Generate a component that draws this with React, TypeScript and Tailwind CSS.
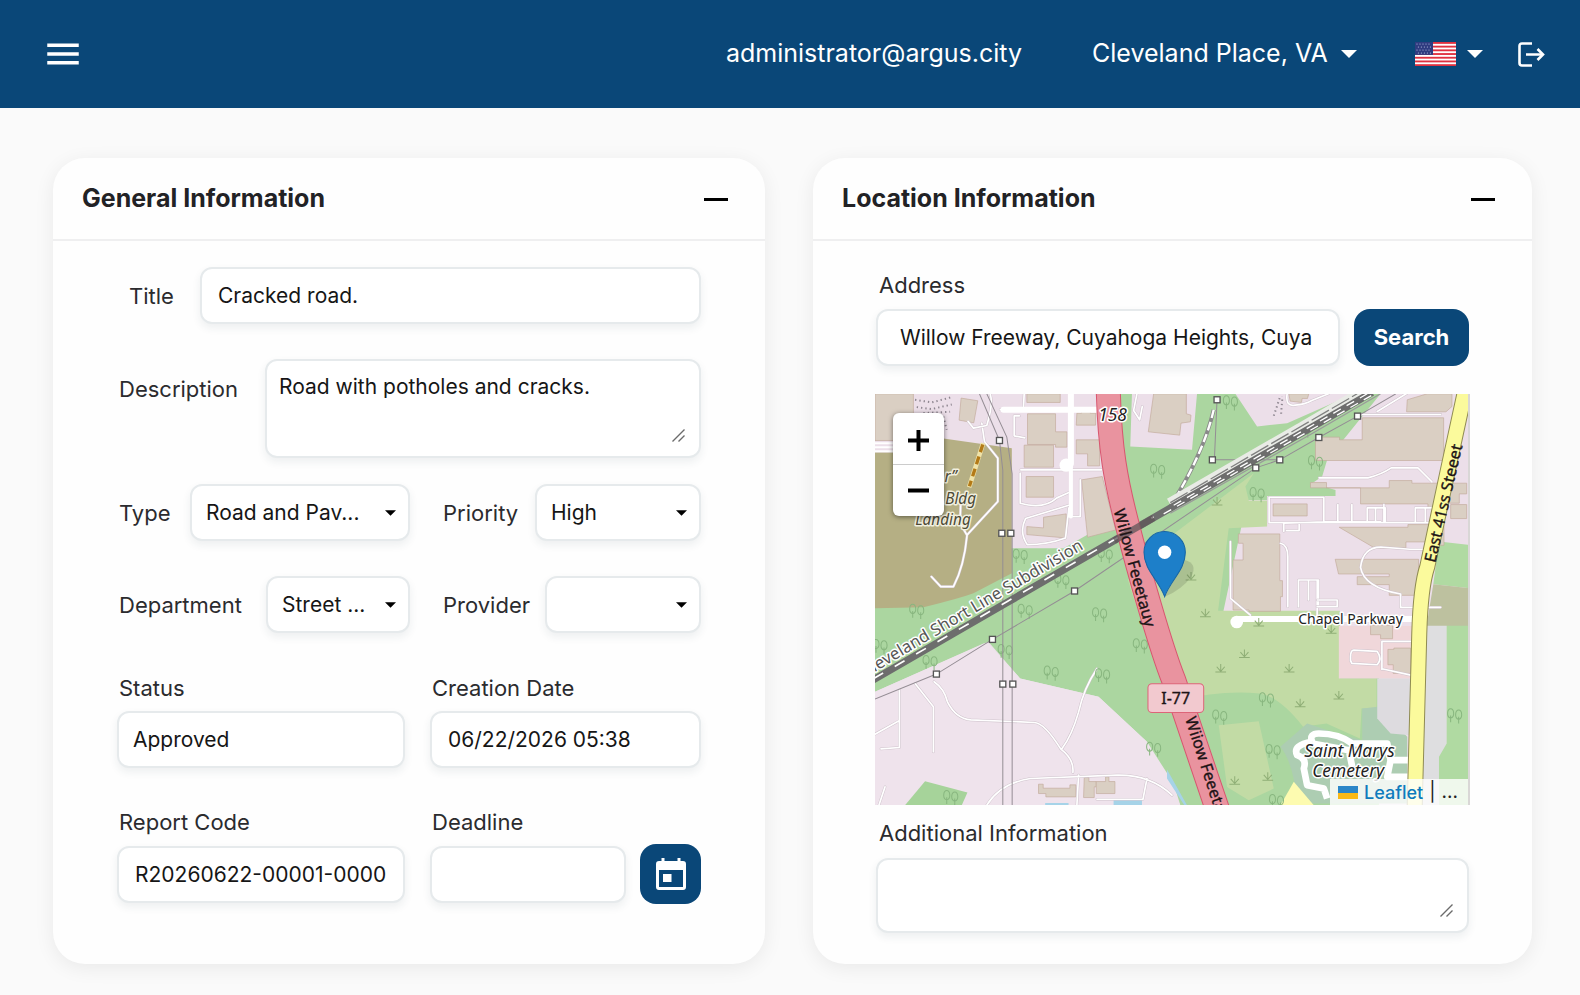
import React from "react";
import { MdMenu } from "react-icons/md";

const FIELD =
  "block w-full min-w-0 rounded-xl border-2 border-[#e6eaec] bg-white text-[21px] text-[#161616] shadow-[0_4px_8px_rgba(40,60,80,0.08)] outline-none";
const LABEL = "text-[22px] leading-7 text-[#2b2b2e] whitespace-nowrap shrink-0";

const Caret = ({ className }: { className: string }) => (
  <svg viewBox="0 0 16 8" className={className} fill="currentColor" aria-hidden="true">
    <path d="M0 0h16L8 8z" />
  </svg>
);

const Grip = () => (
  <svg
    viewBox="0 0 13 13"
    className="pointer-events-none absolute right-4 bottom-4 h-[13px] w-[13px]"
    stroke="#6b6b6b"
    strokeWidth="1.4"
    aria-hidden="true"
  >
    <path d="M.5 12.5 12.5 .5M6.5 12.5l6-6" />
  </svg>
);

const FlagUS = () => (
  <svg viewBox="0 0 41 24" className="h-6 w-[41px]" aria-hidden="true">
    <path fill="#fff" d="M0 0h41v24H0z" />
    {[0, 1, 2, 3, 4, 5, 6].map((i) => (
      <rect key={i} y={i * 3.7} width="41" height="1.85" fill="#e0303f" />
    ))}
    <path fill="#2f3c80" d="M0 0h18v12.9H0z" />
    {[2, 5, 8, 11].map((y, r) =>
      [2, 5, 8, 11, 14].map((x) => (
        <circle key={`${x}-${y}`} cx={x + (r % 2) * 1.4} cy={y} r=".6" fill="#b9c0e0" />
      ))
    )}
  </svg>
);

interface SelectFieldProps {
  id: string;
  value: string;
}

const SelectField: React.FC<SelectFieldProps> = ({ id, value }) => (
  <div className="relative min-w-0 flex-1">
    <select id={id} defaultValue={value} className={`${FIELD} h-[57px] appearance-none pr-8 pl-[14px]`}>
      <option value={value}>{value}</option>
    </select>
    <Caret className="pointer-events-none absolute top-[26px] right-[14px] h-[6px] w-[11px] text-black" />
  </div>
);

interface CardProps {
  title: string;
  children: React.ReactNode;
}

const Card: React.FC<CardProps> = ({ title, children }) => (
  <section className="min-w-0 rounded-[32px] bg-[#fefefe] shadow-[0_4px_20px_rgba(0,0,0,0.07)]">
    <header className="flex h-[83px] items-center justify-between border-b-2 border-[#efeff0] pr-[37px] pl-[29px]">
      <h2 className="text-[25px] font-bold text-[#222225]">{title}</h2>
      <button aria-label={`Collapse ${title}`} className="flex h-8 w-6 items-center pt-0.5">
        <span className="h-[3px] w-full bg-black" />
      </button>
    </header>
    {children}
  </section>
);

// Map canvas -----------------------------------------------------------------

const TREES = [
  [892, 275], [480, 530], [735, 528], [605, 605], [170, 695], [495, 695], [718, 705], [840, 798],
  [573, 880], [727, 888], [210, 848], [60, 800], [435, 815], [272, 1253], [1110, 70], [1330, 152],
  [1365, 250], [1190, 345], [1218, 960], [1078, 1012], [1238, 1115], [1782, 1008],
  [1248, 1265], [880, 1108],
];

const GRASS = [
  [992, 590], [1070, 365], [1035, 700], [1152, 822], [1081, 866], [1286, 866], [1435, 947],
  [1319, 970], [1412, 750], [1195, 728], [1123, 1202], [1222, 1190],
];

const PYLONS = [
  [418, 182], [425, 460], [452, 460], [428, 912], [458, 912], [397, 778], [229, 882], [643, 633],
  [1070, 60], [1056, 240], [1258, 240], [1186, 264], [1375, 173], [1491, 109],
];

const BUILDINGS = [
  "M45 42H160V182H45z",
  "M303 55l50 8-12 66-44-8z",
  "M500 42h100v26H500z",
  "M502 102h84v54h34v46h-34v-8h-84z",
  "M492 196h88v66h-88z",
  "M498 290h82v62h-82z",
  "M500 440l50 4v-32l68-10v72l-118-10z",
  "M650 100h14V90h26v10h16v36h-58z",
  "M648 180h70v78h-36v-36h-34z",
  "M664 300l62-10 40 160-84 22z",
  "M880 42h98v60l14 4-2 20-28 4-4 36-94-10z",
  "M1285 42h60l-4 14h-16l-2 12-34-4z",
  "M1640 60l60-18h74v38l-18 16h-118z",
  "M1505 114h244v128h-384v-70h72v8h68z",
  "M1350 308h48v16h188v-22h68v8h164v32h-22v28h-58v14h-36v-12h-202v-48h-150z",
  "M1238 372h102v36h-102z",
  "M1436 442h206v-8h108v62h-28v-10h-86v18h-94z",
  "M1134 462h124v140h8v48h-6v44h-94v-4h-48V540h30v-50h-14z",
  "M1424 538h250v108h-88v-32h-96v-24h96v-8h-152z",
  "M1770 374h48v42h-48z",
  "M1530 736h66v40h-36v-12h-30z",
  "M1582 808h18v-4h50v76h-52v-26h-16z",
  "M535 1212h14v12h80v-10h18v36h-90v-10h-22z",
  "M672 1192h14v12h22v16h-6v32h-32z",
  "M708 1204h28v-14h10v14h18v36h-56z",
];

const STREETS = [
  "M365 130l8 55 40 50V365l-92 100Q312 560 280 620h-38l-28-30M320 465l-20-35 2-70",
  "M390 42q10 30-10 95l-40 8-16-20",
  "M420 90h290M478 108h-16v60l32 6M492 42l-2 40",
  "M482 270h242M480 280v90q70 20 110-16l36-16M626 376l-130 40q-20 40 5 78 60 0 115-20l10-90M660 300v110h-34",
  "M830 42l-10 50 18 28 8-40",
  "M1280 42q-6 40 24 34 30-2 50-14l50-20M1550 95l90-55M1500 104h240",
  "M1376 294h146q40-10 70-30h80l42 42",
  "M1226 352h164v74h170M1226 352v76h170M1432 374v50M1474 374v50M1520 384h54v40M1520 384v40M1545 384v40M1570 374v50M1664 384h50M1664 384v40M1694 384v40M1396 428h320M1390 426l-120 4v24M1316 432v20h-38",
  "M1110 485v170l60 50M1260 490q22 5 22 40v150M1314 600h60v80M1314 600v80M1344 600v60M1370 600v110",
  "M1720 508h-72l-80-6q-60-4-68 60 10 60 120 80v40h120M1370 660h60v20h-60",
  "M1470 830q0-20 10-20l70 4q16 22 0 40l-76-4q-6-8-4-20M1564 868V784h90M1564 866l90 20",
  "M165 910l55 70v135M222 905q30 20 40 60 25 50 70 54l190 8q30 0 80 80 40 30 36 70M710 866q-40 60-55 130-20 70-50 110",
  "M118 930v88M118 1012v90l-55 4M45 1062l72-40M380 1275q40-65 130-80l260-10q100-2 165 60M655 1185l-5 90M860 1195l-12 62H710M75 1220l-20 60",
];

const Road: React.FC<{ d: string; width: number }> = ({ d, width }) => (
  <>
    <path d={d} stroke="#cfc3cc" strokeWidth={width + 3} />
    <path d={d} stroke="#fff" strokeWidth={width} />
  </>
);

const MapCanvas = () => (
  <svg
    viewBox="45 42 1783 1233"
    preserveAspectRatio="xMidYMid slice"
    className="block h-full w-full bg-[#efe3ec]"
    fontFamily='"Noto Sans", sans-serif'
    role="img"
    aria-label="Street map around Willow Freeway"
  >
    {/* land cover */}
    <path fill="#ecdfe9" d="M45 42h1783v1233H45z" />
    <path fill="#abd6a0" d="M45 640L455 505H610L725 440 780 420V42h35l-5 158 185 10 15-168h115l65 98 90-10 200-88h80L1400 240l-15 50-30 20 70 20v18h-205v12h-60L1075 760h480v515H960L860 1085 715 950 480 895 385 785 45 935z" />
    <path fill="#b5af84" d="M45 218V685l145-3q110-27 150-42l115-60V205L245 175 100 165v53z" />
    <path fill="#c2dba5" d="M930 470l250-190-25 40 10 42h55v78l-115 5-32 247h365v203h110v90h-45l-5 90-100-45-70 10q-70-90-130-100-120-10-240 20-30-60-60-120-50-90-95-240z" />
    <path fill="#c2dba5" d="M1075 1035l120-12 45 202-75 35-65-40z" />
    <path fill="#adcdb2" d="M1505 985l45-5 90 90v200h-330q-10-120-50-170l80-70 90 30 75 20z" />
    <path fill="#efe3ec" d="M45 935l325-145h15l95 105 235 55 145 135 80 125 20 65H45z" />
    <path fill="#a6d39a" d="M195 1203l127 34-17 38H135z" />
    <path fill="#f0d7da" d="M1435 738h220v157h-220z" />
    <path fill="#dddbdf" d="M1550 895h100v170l-60-5-40-45z" />
    <path fill="#dedee0" d="M1700 735h58v355l-23 40v145h-60z" />
    <path fill="#b0daa2" d="M1758 735h70v540h-93v-145l23-40zM1735 485l93 10v130l-110-12z" />
    <path fill="#bdc19f" d="M1718 613l110 12v112h-130z" />
    <path fill="#fdfbb0" d="M1300 1205l-40 70h100z" />
    <path fill="#a6d3e8" d="M555 1268h70v10h-70zM760 1260h85v15h-85zM920 1168l60 107h-8l-52-80z" />

    {/* gravel and parking stripes */}
    <path stroke="#8e8690" strokeWidth="6" strokeDasharray="4 9" fill="none" d="M165 60l50 8 60-16M170 82l45 6 60-14M190 100l80-4M250 110l10 40M1240 108l20-60M1262 102l4-52" />
    <path stroke="#fff" strokeWidth="6" d="M45 190h60M45 202h60M45 214h60" />

    <g fill="#dacfc3" stroke="#c2ab9c" strokeWidth="2">
      {BUILDINGS.map((d) => (
        <path key={d} d={d} />
      ))}
    </g>

    <g fill="none" strokeLinecap="round" strokeLinejoin="round">
      {STREETS.map((d) => (
        <Road key={d} d={d} width={5} />
      ))}
      <path stroke="#fff" strokeWidth="18" d="M430 90h285M632 42v210M1135 717h520" />
      <path stroke="#fff" strokeWidth="12" d="M632 250v160" />
    </g>
    <circle cx="618" cy="256" r="20" fill="#fff" />
    <circle cx="1129" cy="726" r="19" fill="#fff" />
    <path fill="none" stroke="#f0e3a8" strokeWidth="14" d="M369 190l-42 132" />
    <path fill="none" stroke="#b37a17" strokeWidth="10" strokeDasharray="24 14" d="M368 194l-40 125" />

    {/* trees and grass tufts */}
    <g fill="none" stroke="#88b67f" strokeWidth="3">
      {TREES.map(([x, y]) => (
        <path
          key={`${x}-${y}`}
          d={`M${x - 12} ${y + 18}v-20m0 8c-14-4-10-28 0-28s14 24 0 28M${x + 12} ${y + 22}v-20m0 8c-14-4-10-28 0-28s14 24 0 28`}
        />
      ))}
    </g>
    <g fill="none" stroke="#8fae76" strokeWidth="3">
      {GRASS.map(([x, y]) => (
        <path key={`${x}-${y}`} d={`M${x - 16} ${y + 10}h32M${x} ${y + 10}v-24M${x} ${y + 8}l-12-14M${x} ${y + 8}l12-14`} />
      ))}
    </g>

    {/* cemetery paths */}
    <path
      fill="none"
      stroke="#fff"
      strokeWidth="20"
      strokeLinejoin="round"
      d="M1355 1085q-10-25 20-25 60 0 100 30h105l10 50h75M1355 1085q-60 10-45 40 30 10 20 40l10 50 50 10 10 30M1355 1090l110 20 10 50M1590 1140l-10 50h75"
    />

    {/* power lines */}
    <g fill="none" stroke="#948d94" strokeWidth="3">
      <path d="M358 42l60 140 10 90v1003M380 42l60 130 16 110v993" />
      <path d="M45 957l184-75 168-104 246-145 543-369 72-24 117-67 116-64 115-67M1070 60l-8 180h196" />
    </g>

    {/* railway */}
    <g fill="none">
      <path stroke="#8a8a8a" strokeWidth="12" d="M1060 90Q1030 220 930 380" />
      <path stroke="#fff" strokeWidth="7" strokeDasharray="26 12" d="M1060 90Q1030 220 930 380" />
      <path stroke="#e9ebe6" strokeWidth="40" d="M930 374L1190 224 1340 138 1510 38" />
      <path stroke="#6d6d6d" strokeWidth="22" strokeLinejoin="round" d="M30 905L440 668 900 402 1190 236 1340 150 1535 38" />
      <path stroke="#fff" strokeWidth="5" strokeDasharray="34 40" d="M40 896L440 665 880 411" />
      <path stroke="#808080" strokeWidth="4" strokeDasharray="60 10" d="M930 368L1180 222 1490 42" />
      <path stroke="#fff" strokeWidth="4" strokeDasharray="26 20" d="M910 402L1190 242 1345 154 1535 46M940 376L1190 232 1520 42" />
      <path stroke="#9a9a9a" strokeWidth="4" d="M930 400L1190 254 1350 164 1560 42" />
    </g>

    {/* motorway */}
    <g fill="none">
      <path stroke="#d8566f" strokeWidth="75" d="M744 30C748 200 765 300 805 450 830 550 900 800 940 900L1072 1290" />
      <path stroke="#e9939f" strokeWidth="69" d="M744 30C748 200 765 300 805 450 830 550 900 800 940 900L1072 1290" />
      <path stroke="#5f5558" strokeOpacity=".75" strokeWidth="20" d="M762 482L880 414" />
      <path stroke="#8f8b52" strokeWidth="48" d="M1814 30L1762 270 1700 560Q1680 620 1676 760L1662 1290" />
      <path stroke="#fbfa9c" strokeWidth="42" d="M1814 30L1762 270 1700 560Q1680 620 1676 760L1662 1290" />
    </g>

    <g fill="#fff" stroke="#555" strokeWidth="4">
      {PYLONS.map(([x, y]) => (
        <rect key={`${x}-${y}`} x={x - 9} y={y - 9} width="18" height="18" />
      ))}
    </g>

    <rect x="863" y="911" width="167" height="86" rx="12" fill="#f2c9cf" stroke="#dd6478" strokeWidth="3" />

    {/* place and road names */}
    <g fontSize="46" fill="#222" stroke="#fff" strokeWidth="9" strokeLinejoin="round" paintOrder="stroke">
      <text x="757" y="124" fontSize="52" fontStyle="italic" textAnchor="middle">158</text>
      <text transform="translate(672 506) rotate(-30.5)" textAnchor="end" fontSize="50" fill="#555">Cleveland Short Line Subdivision</text>
      <text x="1470" y="732" fontSize="42" textAnchor="middle">Chapel Parkway</text>
      <text x="1467" y="1130" fontSize="52" fontStyle="italic" textAnchor="middle">Saint Marys</text>
      <text x="1463" y="1190" fontSize="52" fontStyle="italic" textAnchor="middle">Cemetery</text>
      <g fontStyle="italic" fill="#4d4a36" stroke="#f1efdf">
        <text x="290" y="306" textAnchor="end">r”</text>
        <text x="348" y="371" textAnchor="end">Bldg</text>
        <text x="332" y="434" textAnchor="end">Landing</text>
      </g>
    </g>
    <g fontSize="48" fill="#1d1416" stroke="#1d1416" strokeWidth="1">
      <text x="946" y="972" textAnchor="middle">I-77</text>
      <text transform="translate(760 392) rotate(75)">Willow Feeetauy</text>
      <text transform="translate(974 1016) rotate(72)">Wiiow Feeeta</text>
      <text transform="translate(1724 550) rotate(-77)">East 41ss Steeet</text>
    </g>

    {/* marker */}
    <path fill="#000" opacity=".12" d="M913 650l60-110q40 10 20 50-30 40-80 60z" />
    <path
      fill="#1d7fc9"
      stroke="#1565a5"
      strokeWidth="3"
      d="M913 650C895 600 851 570 851 517a62 62 0 01124 0C975 570 931 600 913 650z"
    />
    <circle cx="913" cy="517" r="20" fill="#fff" />
    <path fill="#d9d7d6" d="M1822 42h6v1233h-6z" />
  </svg>
);

const LocationMap = () => (
  <div className="relative h-[411px] overflow-hidden">
    <MapCanvas />
    <div className="absolute top-[19px] left-[18px] flex w-[51px] flex-col overflow-hidden rounded-md bg-white shadow-[0_1px_5px_rgba(0,0,0,0.5)]">
      <button aria-label="Zoom in" className="flex h-[52px] items-center justify-center border-b border-[#ccc] pt-1">
        <svg viewBox="0 0 21 21" className="h-[21px] w-[21px]" stroke="#000" strokeWidth="4">
          <path d="M0 10.5h21M10.5 0v21" />
        </svg>
      </button>
      <button aria-label="Zoom out" className="flex h-[51px] items-center justify-center">
        <svg viewBox="0 0 21 21" className="h-[21px] w-[21px]" stroke="#000" strokeWidth="4">
          <path d="M0 10.5h21" />
        </svg>
      </button>
    </div>
    <div className="absolute right-[2px] bottom-0 flex h-[26px] items-center gap-[6px] bg-white/80 pr-[10px] pl-2 text-[19px] text-[#222]">
      <svg viewBox="0 0 20 13" className="h-[13px] w-5" aria-hidden="true">
        <path fill="#2b86c8" d="M0 0h20v7H0z" />
        <path fill="#f9b916" d="M0 7h20v6H0z" />
      </svg>
      <a href="#leaflet" className="text-[18px] font-medium text-[#0f7cbd]">Leaflet</a>
      <span>|</span>
      <span>...</span>
    </div>
  </div>
);

// Page -----------------------------------------------------------------------

const TopBar = () => (
  <header className="flex h-[108px] items-center bg-[#0a4778] pr-[35px] pl-[42px] text-[25px] text-white">
    <button aria-label="Open menu" className="mr-auto">
      <MdMenu className="h-[42px] w-[42px]" />
    </button>
    <span>administrator@argus.city</span>
    <div className="relative ml-[70px] flex items-center">
      <select aria-label="City" className="appearance-none bg-transparent pr-[29px] outline-none">
        <option>Cleveland Place, VA</option>
      </select>
      <Caret className="pointer-events-none absolute right-0 h-2 w-4" />
    </div>
    <button aria-label="Language" className="ml-[58px] flex items-center gap-[11px]">
      <FlagUS />
      <Caret className="h-2 w-4" />
    </button>
    <button aria-label="Log out" className="ml-[35px]">
      <svg viewBox="0 0 27 25" className="h-[25px] w-[27px]" fill="none" stroke="currentColor" strokeWidth="2.6">
        <path d="M14 1.5H4Q1.5 1.5 1.5 4v17q0 2.5 2.5 2.5h10M8 12.5h16" />
        <path d="M19.5 7l5.500 5.500-5.500 5.500" />
      </svg>
    </button>
  </header>
);

const GeneralInformation = () => (
  <form className="px-16 pt-[26px] pb-[59px]">
    <div className="flex items-center">
      <label htmlFor="title" className={`${LABEL} w-[83px] pl-3`}>Title</label>
      <input id="title" defaultValue="Cracked road." className={`${FIELD} h-[57px] px-4`} />
    </div>

    <div className="mt-[35px] flex">
      <label htmlFor="description" className={`${LABEL} w-[148px] pt-4 pl-0.5`}>Description</label>
      <div className="relative min-w-0 flex-1">
        <textarea
          id="description"
          defaultValue="Road with potholes and cracks."
          className={`${FIELD} h-[99px] resize-none px-3 py-3 leading-7`}
        />
        <Grip />
      </div>
    </div>

    <div className="mt-[26px] grid grid-cols-[minmax(0,293fr)_minmax(0,258fr)] gap-x-[33px] gap-y-[35px]">
      <div className="flex items-center">
        <label htmlFor="type" className={`${LABEL} w-[73px] pl-0.5`}>Type</label>
        <SelectField id="type" value="Road and Pav..." />
      </div>
      <div className="flex items-center">
        <label htmlFor="priority" className={`${LABEL} w-[92px]`}>Priority</label>
        <SelectField id="priority" value="High" />
      </div>
      <div className="flex items-center">
        <label htmlFor="department" className={`${LABEL} w-[149px] pl-0.5`}>Department</label>
        <SelectField id="department" value="Street ..." />
      </div>
      <div className="flex items-center">
        <label htmlFor="provider" className={`${LABEL} w-[102px]`}>Provider</label>
        <SelectField id="provider" value="" />
      </div>
    </div>

    <div className="mt-[41px] grid grid-cols-[minmax(0,288fr)_minmax(0,271fr)] gap-x-[25px] gap-y-10">
      <div className="flex flex-col gap-[9px]">
        <label htmlFor="status" className={`${LABEL} pl-0.5`}>Status</label>
        <input id="status" readOnly value="Approved" className={`${FIELD} h-[57px] px-[14px]`} />
      </div>
      <div className="flex flex-col gap-[9px]">
        <label htmlFor="created" className={`${LABEL} pl-0.5`}>Creation Date</label>
        <input id="created" readOnly value="06/22/2026 05:38" className={`${FIELD} h-[57px] px-4`} />
      </div>
      <div className="flex flex-col gap-2">
        <label htmlFor="code" className={`${LABEL} pl-0.5`}>Report Code</label>
        <div className="flex h-[60px] items-center">
          <input id="code" readOnly value="R20260622-00001-0000" className={`${FIELD} h-[57px] px-4`} />
        </div>
      </div>
      <div className="flex flex-col gap-2">
        <label htmlFor="deadline" className={`${LABEL} pl-0.5`}>Deadline</label>
        <div className="flex h-[60px] items-center gap-[14px]">
          <input id="deadline" className={`${FIELD} h-[57px] px-4`} />
          <button
            type="button"
            aria-label="Pick deadline"
            className="flex h-[60px] w-[61px] shrink-0 items-center justify-center rounded-2xl bg-[#0a4778] text-white"
          >
            <svg viewBox="0 0 30 32" className="h-8 w-[30px]">
              <path
                fill="currentColor"
                fillRule="evenodd"
                d="M5.500 0h3v3h13V0h3v3H27q3 0 3 3v23q0 3-3 3H3q-3 0-3-3V6q0-3 3-3h2.500zM3 12v17h24V12zM7 16h8.500v8H7z"
              />
            </svg>
          </button>
        </div>
      </div>
    </div>
  </form>
);

const LocationInformation = () => (
  <form className="px-[62px] pt-[30px] pb-[31px]">
    <label htmlFor="address" className={`${LABEL} block pl-1`}>Address</label>
    <div className="mt-[10px] flex items-center gap-[14px] px-px">
      <input
        id="address"
        defaultValue="Willow Freeway, Cuyahoga Heights, Cuya"
        className={`${FIELD} h-[57px] px-[22px]`}
      />
      <button
        type="button"
        className="h-[57px] w-[115px] shrink-0 rounded-2xl bg-[#0a4778] text-[22px] font-bold text-white"
      >
        Search
      </button>
    </div>
    <div className="mt-7">
      <LocationMap />
    </div>
    <label htmlFor="additional" className={`${LABEL} mt-[14px] block pl-1`}>Additional Information</label>
    <div className="mt-[11px] px-px">
      <div className="relative">
        <textarea id="additional" className={`${FIELD} h-[75px] resize-none px-4 py-3`} />
        <Grip />
      </div>
    </div>
  </form>
);

const App: React.FC = () => (
  <div className="min-h-screen bg-[#fafafa] font-['Inter',sans-serif]">
    <TopBar />
    <main className="grid grid-cols-[minmax(0,712fr)_minmax(0,719fr)] gap-12 pt-[50px] pr-12 pb-8 pl-[53px]">
      <Card title="General Information">
        <GeneralInformation />
      </Card>
      <Card title="Location Information">
        <LocationInformation />
      </Card>
    </main>
  </div>
);

export default App;
